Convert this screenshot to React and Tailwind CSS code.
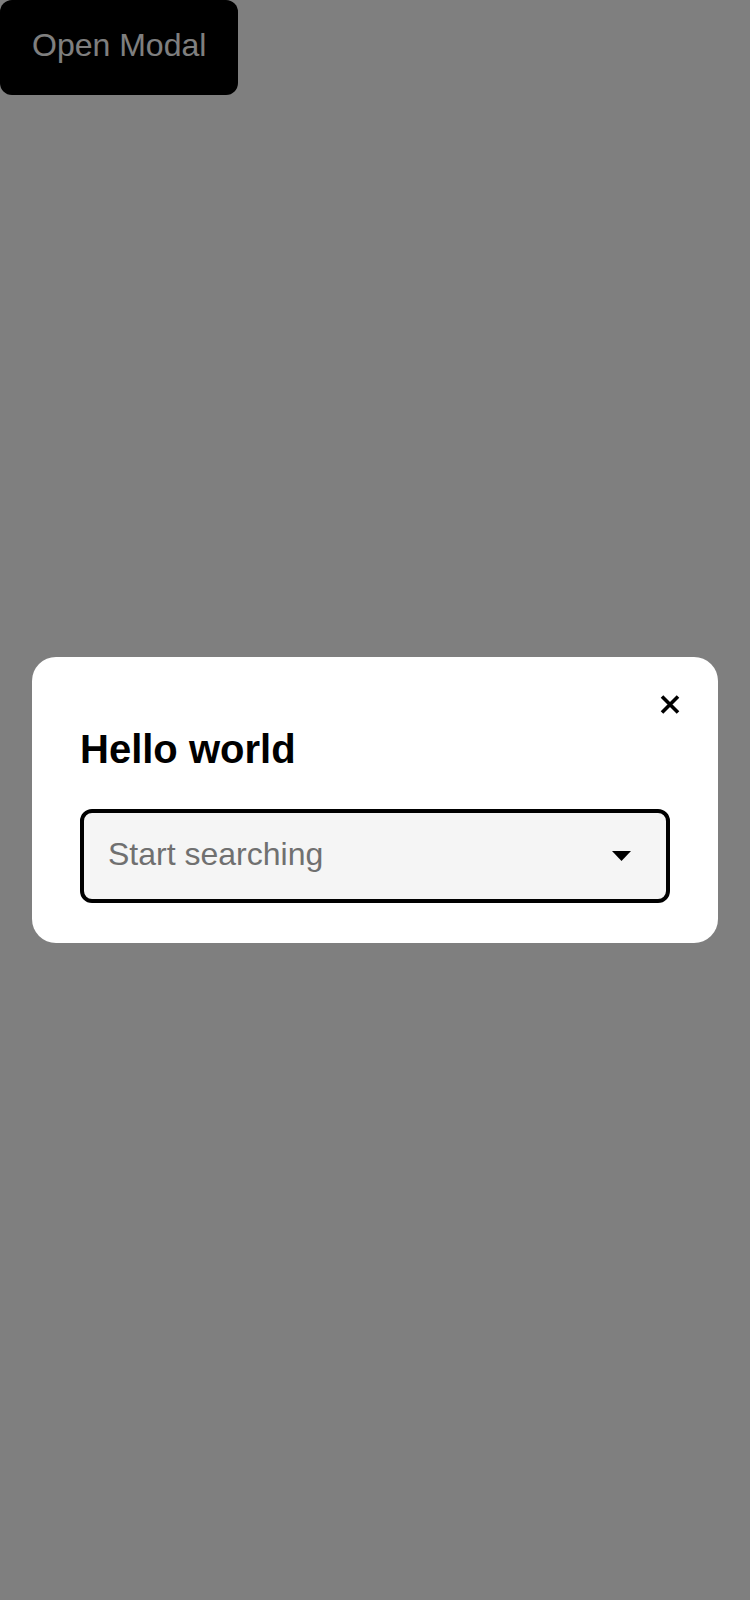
import React, { useState } from 'react';

const CloseIcon = () => (
  <svg width="20" height="20" viewBox="0 0 20 20" fill="none">
    <path d="M2 1.5L18 17.5M18 1.5L2 17.5" stroke="black" strokeWidth="3.6" strokeLinecap="butt" />
  </svg>
);

const Caret = () => (
  <svg width="19" height="10" viewBox="0 0 19 10">
    <polygon points="0,0 19,0 9.5,10" fill="black" />
  </svg>
);

const App = () => {
  const [open, setOpen] = useState(true);

  return (
    <div className="relative min-h-[1600px] bg-white font-['Liberation_Sans',Arial,sans-serif]">
      <button
        onClick={() => setOpen(true)}
        className="bg-black text-white text-[32px] leading-[37px] px-8 pt-[27px] pb-[31px] rounded-xl"
      >
        Open Modal
      </button>

      {open && (
        <div className="fixed inset-0 bg-black/50 flex items-center justify-center px-8">
          <div className="relative w-full bg-white rounded-3xl px-12 pt-[69px] pb-10">
            <button onClick={() => setOpen(false)} className="absolute top-[38px] right-[38px] w-5 h-5">
              <CloseIcon />
            </button>
            <h2 className="text-[40px] leading-[46px] font-bold text-black mb-[37px]">Hello world</h2>
            <div className="h-[94px] flex items-center justify-between border-4 border-black rounded-xl bg-[#f5f5f5] pl-6 pr-[35px]">
              <span className="text-[32px] leading-[37px] text-[#707070] pb-1">Start searching</span>
              <Caret />
            </div>
          </div>
        </div>
      )}
    </div>
  );
};

export default App;
